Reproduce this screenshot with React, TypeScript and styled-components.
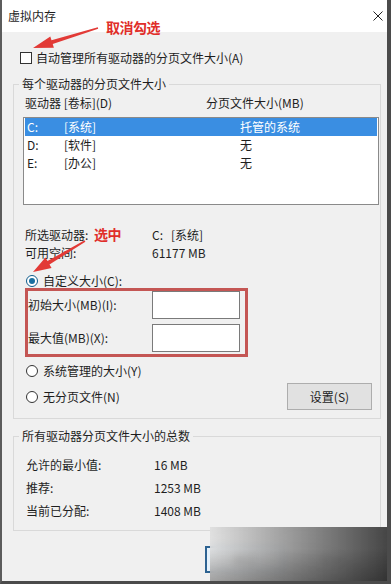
import React from 'react';
import styled, { createGlobalStyle } from 'styled-components';

const Global = createGlobalStyle`
  html, body { margin: 0; padding: 0; background: #fff; }
  body {
    font-family: "Noto Sans CJK SC", "Noto Sans", sans-serif;
    font-size: 12px;
    color: #1e1e1e;
  }
  * { box-sizing: border-box; }
`;

const Window = styled.div`
  position: relative;
  width: 391px;
  height: 584px;
  background: #f0f0f0;
  border-left: 2px solid #5c5c5c;
  border-right: 4px solid #4b4b4b;
  border-bottom: 3px solid #4b4b4b;
  display: flex;
  flex-direction: column;
  overflow: hidden;
`;

const TitleBar = styled.div`
  height: 32px;
  flex: none;
  background: #fff;
  display: flex;
  align-items: center;
  justify-content: space-between;
  padding: 0 4px 0 6px;
  font-size: 12px;
  line-height: 16px;
`;

const Body = styled.div`
  display: flex;
  flex-direction: column;
  padding: 16px 6px 0 11px;
  line-height: 16px;
`;

const CheckRow = styled.label`
  height: 20px;
  display: flex;
  align-items: center;
  gap: 4px;
  padding-left: 7px;
`;

const CheckBox = styled.span`
  width: 12px;
  height: 12px;
  border: 1px solid #333;
  background: #fff;
  flex: none;
`;

const Group = styled.fieldset<{ $top: number }>`
  margin: ${(p) => p.$top}px 0 0;
  padding: 0;
  min-width: 0;
  border: 1px solid #d9d9d9;
`;

const Legend = styled.legend`
  margin-left: 5px;
  padding: 0 3px;
  font-size: 12px;
  line-height: 16px;
`;

const GroupBody = styled.div`
  display: flex;
  flex-direction: column;
  padding: 0 1px 8px 9px;
`;

const HeaderRow = styled.div`
  margin-top: 3px;
  height: 16px;
  display: grid;
  grid-template-columns: 181px 1fr;
  padding-left: 2px;
`;

const ListBox = styled.div`
  margin-top: 6px;
  height: 88px;
  border: 1px solid #8a8a8a;
  background: #fff;
`;

const ListRow = styled.div<{ $selected?: boolean }>`
  height: 18px;
  margin: 0 1px;
  display: grid;
  grid-template-columns: 37px 176px 1fr;
  align-items: center;
  padding-left: 2px;
  background: ${(p) => (p.$selected ? '#3a8ee2' : 'transparent')};
  color: ${(p) => (p.$selected ? '#fff' : '#1e1e1e')};
`;

const InfoGrid = styled.div<{ $top: number; $row: number; $label: number; $pad: number }>`
  margin-top: ${(p) => p.$top}px;
  display: grid;
  grid-template-columns: ${(p) => p.$label}px 1fr;
  grid-auto-rows: ${(p) => p.$row}px;
  align-items: center;
  padding-left: ${(p) => p.$pad}px;
`;

const RadioRow = styled.label<{ $top: number }>`
  margin-top: ${(p) => p.$top}px;
  height: 14px;
  display: flex;
  align-items: center;
  gap: 5px;
  padding-left: 3px;
`;

const Radio = styled.span<{ $checked?: boolean }>`
  width: 12px;
  height: 12px;
  border-radius: 50%;
  border: 1px solid ${(p) => (p.$checked ? '#0f5c8c' : '#333')};
  background: #fff;
  flex: none;
  display: flex;
  align-items: center;
  justify-content: center;
  &::after {
    content: '';
    width: 6px;
    height: 6px;
    border-radius: 50%;
    background: ${(p) => (p.$checked ? '#1a6fa0' : 'transparent')};
  }
`;

const RedBox = styled.div`
  margin-left: 2px;
  width: 223px;
  border: 3px solid #c45654;
  padding: 0 5px 2px 0;
  display: flex;
  flex-direction: column;
  gap: 5px;
`;

const InputRow = styled.div`
  height: 28px;
  display: grid;
  grid-template-columns: 124px 88px;
  align-items: center;
`;

const TextInput = styled.div`
  height: 28px;
  border: 1px solid #7a7a7a;
  background: #fff;
`;

const LastRow = styled.div`
  margin-top: 5px;
  display: flex;
  align-items: center;
  justify-content: space-between;
  padding-right: 7px;
`;

const InlineRadio = styled.label`
  display: flex;
  align-items: center;
  gap: 5px;
  padding-left: 3px;
`;

const Button = styled.div<{ $w: number; $primary?: boolean }>`
  width: ${(p) => p.$w}px;
  height: 27px;
  display: flex;
  align-items: center;
  justify-content: center;
  background: ${(p) => (p.$primary ? '#e5f1fb' : '#e1e1e1')};
  border: ${(p) => (p.$primary ? '2px solid #2d6291' : '1px solid #adadad')};
`;

const BottomBar = styled.div`
  margin-top: 15px;
  display: flex;
  gap: 6px;
  padding-left: 192px;
`;

const Annotation = styled.div<{ $x: number; $y: number }>`
  position: absolute;
  left: ${(p) => p.$x}px;
  top: ${(p) => p.$y}px;
  color: #e02e2a;
  font-weight: 700;
  font-size: 14px;
  line-height: 14px;
  letter-spacing: -0.5px;
`;

const ArrowLayer = styled.svg`
  position: absolute;
  left: -2px;
  top: 0;
  pointer-events: none;
`;

const Veil = styled.div`
  position: absolute;
  left: 208px;
  top: 527px;
  right: 0;
  bottom: 0;
  backdrop-filter: blur(3px);
  background:
    linear-gradient(to bottom, rgba(0, 0, 0, 0) 40%, rgba(0, 0, 0, 0.28) 100%),
    linear-gradient(to right, rgba(222, 222, 222, 0.88) 0%, rgba(150, 150, 150, 0.95) 45%, rgba(70, 70, 70, 1) 100%);
`;

export default function App() {
  return (
    <>
      <Global />
      <Window>
        <TitleBar>
          <span>虚拟内存</span>
          <svg width="10" height="10" viewBox="0 0 10 10">
            <path d="M0.5 0.5 L9.5 9.5 M9.5 0.5 L0.5 9.5" stroke="#222" strokeWidth="1" />
          </svg>
        </TitleBar>
        <Body>
          <CheckRow>
            <CheckBox />
            <span>自动管理所有驱动器的分页文件大小(A)</span>
          </CheckRow>

          <Group $top={8}>
            <Legend>每个驱动器的分页文件大小</Legend>
            <GroupBody>
              <HeaderRow>
                <span>驱动器 [卷标](D)</span>
                <span>分页文件大小(MB)</span>
              </HeaderRow>
              <ListBox>
                <ListRow $selected>
                  <span>C:</span>
                  <span>[系统]</span>
                  <span>托管的系统</span>
                </ListRow>
                <ListRow>
                  <span>D:</span>
                  <span>[软件]</span>
                  <span>无</span>
                </ListRow>
                <ListRow>
                  <span>E:</span>
                  <span>[办公]</span>
                  <span>无</span>
                </ListRow>
              </ListBox>

              <InfoGrid $top={21} $row={18} $label={127} $pad={2}>
                <span>所选驱动器:</span>
                <span>C:&nbsp;&nbsp;&nbsp;[系统]</span>
                <span>可用空间:</span>
                <span>61177 MB</span>
              </InfoGrid>

              <RadioRow $top={12}>
                <Radio $checked />
                <span>自定义大小(C):</span>
              </RadioRow>
              <RedBox>
                <InputRow>
                  <span>初始大小(MB)(I):</span>
                  <TextInput />
                </InputRow>
                <InputRow>
                  <span>最大值(MB)(X):</span>
                  <TextInput />
                </InputRow>
              </RedBox>

              <RadioRow $top={7}>
                <Radio />
                <span>系统管理的大小(Y)</span>
              </RadioRow>
              <LastRow>
                <InlineRadio>
                  <Radio />
                  <span>无分页文件(N)</span>
                </InlineRadio>
                <Button $w={85}>设置(S)</Button>
              </LastRow>
            </GroupBody>
          </Group>

          <Group $top={9}>
            <Legend>所有驱动器分页文件大小的总数</Legend>
            <GroupBody>
              <InfoGrid $top={9} $row={23} $label={128} $pad={3}>
                <span>允许的最小值:</span>
                <span>16 MB</span>
                <span>推荐:</span>
                <span>1253 MB</span>
                <span>当前已分配:</span>
                <span>1408 MB</span>
              </InfoGrid>
            </GroupBody>
          </Group>

          <BottomBar>
            <Button $w={80} $primary>确定</Button>
            <Button $w={82}>取消</Button>
          </BottomBar>
        </Body>

        <Annotation $x={104} $y={20}>取消勾选</Annotation>
        <Annotation $x={92} $y={227}>选中</Annotation>

        <ArrowLayer width="391" height="584" viewBox="0 0 391 584">
          <polygon
            fill="#e23a36"
            points="33,48 50.3,36.4 51.5,40.2 97.8,27.2 98.2,28.8 52.7,44.0 53.9,47.8"
          />
          <polygon
            fill="#e23a36"
            points="33,272 45.4,257.6 47.5,261.1 84.6,240.3 85.4,241.7 49.5,264.5 51.6,268.0"
          />
        </ArrowLayer>

        <Veil />
      </Window>
    </>
  );
}
